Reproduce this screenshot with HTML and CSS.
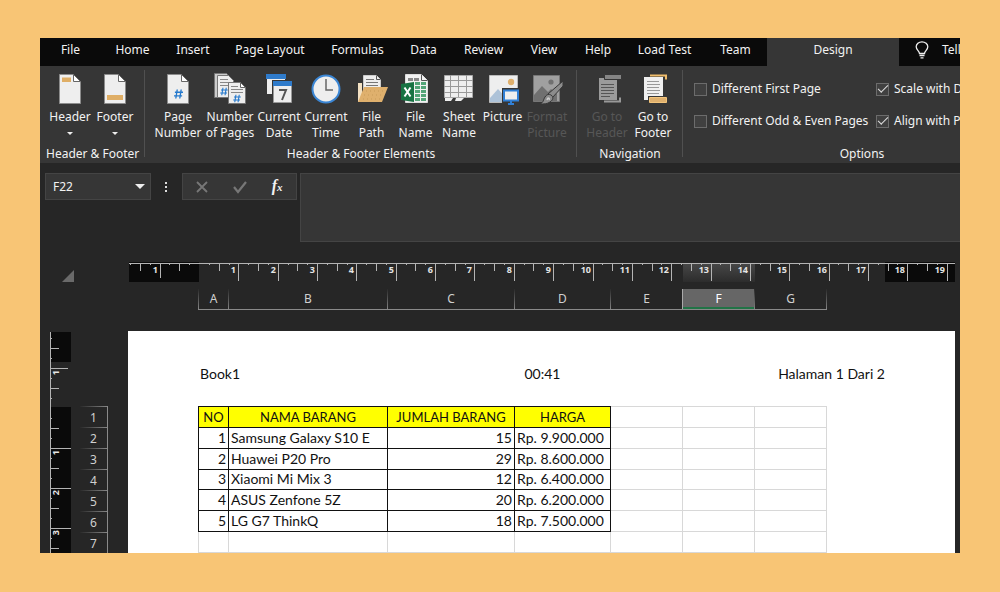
FILE: index.html
```html
<!DOCTYPE html>
<html lang="id">
<head>
    <meta charset="utf-8">
    <title>Book1 - Excel</title>
    <link rel="stylesheet" href="styles.css">
</head>
<body>
    <!-- shared icon shapes -->
    <svg class="defs" width="0" height="0">
        <symbol id="doc" viewBox="0 0 32 32">
            <path d="M5.5 1.5h14l7 7v22h-21z" fill="#eee" stroke="#8c8c8c"/>
            <path d="M19.5 1.5v7h7z" fill="#fff" stroke="#666"/>
        </symbol>
        <symbol id="hash" viewBox="0 0 10 12">
            <path d="M3.6 1L2 11M8 1L6.4 11M1 4h9M0 8h9" fill="none" stroke="#2478cc" stroke-width="1.5"/>
        </symbol>
    </svg>

    <div class="app">
        <nav class="tabs">
            <button type="button">File</button>
            <button type="button">Home</button>
            <button type="button">Insert</button>
            <button type="button">Page Layout</button>
            <button type="button">Formulas</button>
            <button type="button">Data</button>
            <button type="button">Review</button>
            <button type="button">View</button>
            <button type="button">Help</button>
            <button type="button">Load Test</button>
            <button type="button">Team</button>
            <button type="button" class="active">Design</button>
            <button type="button" class="tell-me">
                <svg width="14" height="18" viewBox="0 0 14 18" fill="none" stroke="#eee" stroke-width="1.3">
                    <path d="M4.5 12.5c0-2.5-3.3-3.5-3.3-6.7a5.8 5 0 0 1 11.6 0c0 3.2-3.3 4.2-3.3 6.7zM4.5 14.5h5M5.5 16.8h3"/>
                </svg>
                <span>Tell me</span>
            </button>
        </nav>

        <div class="ribbon">
            <section class="group group-hf">
                <div class="tools">
                    <button type="button">
                        <svg class="icon" viewBox="0 0 32 32"><use href="#doc"/><path d="M8 4.5h9V9H8z" fill="#dfae66"/></svg>
                        <span>Header</span><i class="caret"></i>
                    </button>
                    <button type="button">
                        <svg class="icon" viewBox="0 0 32 32"><use href="#doc"/><path d="M8 22h16v5H8z" fill="#dfae66"/></svg>
                        <span>Footer</span><i class="caret"></i>
                    </button>
                </div>
                <div class="group-name">Header &amp; Footer</div>
            </section>

            <section class="group group-elements">
                <div class="tools">
                    <button type="button">
                        <svg class="icon" viewBox="0 0 32 32"><use href="#doc"/><use href="#hash" x="12" y="15" width="9" height="12"/></svg>
                        <span>Page Number</span>
                    </button>
                    <button type="button">
                        <svg class="icon" viewBox="0 0 32 32">
                            <path d="M.5.5h12l3 3v21H.5z" fill="#ccc" stroke="#777"/>
                            <path d="M3.5 2.5h11l5 5v17h-16z" fill="#eee" stroke="#777"/>
                            <path d="M6 6.5h8M6 9.5h10M6 12.5h8" stroke="#888"/>
                            <use href="#hash" x="6" y="14" width="8" height="9"/>
                            <path d="M14.5 9.5h12l5 5v16h-17z" fill="#eee" stroke="#777"/>
                            <path d="M26.5 9.5v5h5z" fill="#fff" stroke="#666"/>
                            <path d="M17 13.5h7M17 16.5h12M17 19.5h12" stroke="#888"/>
                            <use href="#hash" x="19" y="21" width="8" height="9"/>
                        </svg>
                        <span>Number of Pages</span>
                    </button>
                    <button type="button">
                        <svg class="icon" viewBox="0 0 32 32">
                            <path d="M4 2h18v19H4z" fill="#eee"/>
                            <path d="M3 1h20v5H3z" fill="#2f7bcb"/>
                            <path d="M9 7h21v24H9z" fill="#363636"/>
                            <path d="M10.5 9.5h18v20h-18z" fill="#eee" stroke="#999"/>
                            <path d="M10 8h19v5H10z" fill="#2f7bcb"/>
                            <path d="M16 17h7l-4 10" fill="none" stroke="#555" stroke-width="2"/>
                        </svg>
                        <span>Current Date</span>
                    </button>
                    <button type="button">
                        <svg class="icon" viewBox="0 0 32 32">
                            <circle cx="16" cy="16" r="13.5" fill="#eee" stroke="#3b86d4" stroke-width="2"/>
                            <path d="M16 6v11h7" fill="none" stroke="#666" stroke-width="1.5"/>
                        </svg>
                        <span>Current Time</span>
                    </button>
                    <button type="button">
                        <svg class="icon" viewBox="0 0 32 32">
                            <path d="M2 10h4v19H2z" fill="#f3e1c3"/>
                            <path d="M7.5 2.5h13l4 4v12h-17z" fill="#eee" stroke="#ccc"/>
                            <path d="M20.5 2.5v4h4" fill="none" stroke="#555"/>
                            <path d="M10 6.5h8M10 9.5h12M10 12.5h12" stroke="#777"/>
                            <path d="M8 14h24l-6 15H2z" fill="#dfb06d"/>
                            <path d="M10 18h17M8 22h18M7 26h18" stroke="#c79a58" stroke-dasharray="1 3"/>
                        </svg>
                        <span>File Path</span>
                    </button>
                    <button type="button">
                        <svg class="icon" viewBox="0 0 32 32">
                            <path d="M5.5 1.5h16l6 6v22h-22z" fill="#f2f2f2" stroke="#ddd"/>
                            <path d="M21.5 1.5v6h6" fill="none" stroke="#555"/>
                            <path d="M8 5h5v3H8zM14 5h5v3h-5z" fill="#888"/>
                            <path d="M15 9h5v3h-5zM21 9h5v3h-5zM15 13h5v3h-5zM21 13h5v3h-5zM15 17h5v3h-5zM21 17h5v3h-5zM15 21h5v3h-5zM21 21h5v3h-5zM15 25h5v3h-5zM21 25h5v3h-5z" fill="#53a578"/>
                            <path d="M1 11l13-2v20L1 27z" fill="#187343"/>
                            <path d="M4.5 14.5l6 9M10.5 14.5l-6 9" stroke="#fff" stroke-width="2"/>
                        </svg>
                        <span>File Name</span>
                    </button>
                    <button type="button">
                        <svg class="icon" viewBox="0 0 32 32">
                            <path d="M1.5 2.5h28v22h-28z" fill="#eee" stroke="#aaa"/>
                            <path d="M7.5 2v22M15.5 2v22M23.5 2v22M1 7.5h29M1 13.5h29M1 19.5h29" stroke="#999"/>
                            <path d="M2 25h8l-2 3H2zM13 25h8l-3 3h-6z" fill="#eee"/>
                        </svg>
                        <span>Sheet Name</span>
                    </button>
                    <button type="button">
                        <svg class="icon" viewBox="0 0 32 32">
                            <path d="M2.5 2.5h28v27h-28z" fill="#eee" stroke="#bbb"/>
                            <path d="M3 29V25l8-9 9 10v3z" fill="#adc2d8"/>
                            <circle cx="24" cy="9" r="3.2" fill="#dfb06d"/>
                            <path d="M15 15h19v17H15z" fill="#363636"/>
                            <path d="M17 17.5h14v10H17z" fill="#eee" stroke="#3180d6" stroke-width="2"/>
                            <path d="M24 28v2.500M21 31h6" stroke="#3180d6" stroke-width="2"/>
                        </svg>
                        <span>Picture</span>
                    </button>
                    <button type="button" disabled>
                        <svg class="icon" viewBox="0 0 32 32">
                            <path d="M2.500 2.500h26v26h-26z" fill="#a0a0a0" stroke="#777"/>
                            <path d="M3 22l8-9 6 6 3-3 6 5v7H3z" fill="#707070"/>
                            <circle cx="20" cy="9" r="2.6" fill="#707070"/>
                            <path d="M32 8v5L21 25l-4-4z" fill="#8c8c8c" stroke="#363636"/>
                            <path d="M20 22c3 2 2 5-1 7s-6 2-10 2c4-2 3-4 5-7s4-3 6-2z" fill="#8c8c8c" stroke="#363636"/>
                            <path d="M16 27c1-3 3-2 2 0" fill="none" stroke="#ccc" stroke-width="1.5"/>
                        </svg>
                        <span>Format Picture</span>
                    </button>
                </div>
                <div class="group-name">Header &amp; Footer Elements</div>
            </section>

            <section class="group group-nav">
                <div class="tools">
                    <button type="button" disabled>
                        <svg class="icon" viewBox="0 0 32 32">
                            <path d="M8 5h18v22H8z" fill="#9b9b9b"/>
                            <path d="M10 11.5h13M10 14.5h13M10 17.5h13M10 20.5h13M10 23.5h9" stroke="#555"/>
                            <path d="M13.5 1.5h17v5h-17z" fill="#858585" stroke="#363636"/>
                            <path d="M13 28.5h16v-4" fill="none" stroke="#999" stroke-width="2"/>
                        </svg>
                        <span>Go to Header</span>
                    </button>
                    <button type="button">
                        <svg class="icon" viewBox="0 0 32 32">
                            <path d="M7 4h19v23H7z" fill="#f0f0f0"/>
                            <path d="M10 8.5h12M10 11.5h13M10 14.5h12M10 17.5h13M10 20.5h12" stroke="#999"/>
                            <path d="M13 2.5h16v4" fill="none" stroke="#f0bd6c" stroke-width="2"/>
                            <path d="M11 23h19v7H11z" fill="#363636"/>
                            <path d="M12.5 24.5h17v5h-17z" fill="#dfb06d" stroke="#f3c57c"/>
                        </svg>
                        <span>Go to Footer</span>
                    </button>
                </div>
                <div class="group-name">Navigation</div>
            </section>

            <section class="group group-options">
                <div class="options">
                    <label><input type="checkbox"> Different First Page</label>
                    <label><input type="checkbox" checked> Scale with Document</label>
                    <label><input type="checkbox"> Different Odd &amp; Even Pages</label>
                    <label><input type="checkbox" checked> Align with Page Margins</label>
                </div>
                <div class="group-name">Options</div>
            </section>
        </div>

        <div class="formula-bar">
            <div class="name-box">
                <input type="text" value="F22" aria-label="Name Box">
                <button type="button" aria-label="Open name list"><i class="caret"></i></button>
            </div>
            <svg class="grip" width="4" height="12" viewBox="0 0 4 12" fill="#ddd"><path d="M1 1h2v2H1zM1 5h2v2H1zM1 9h2v2H1z"/></svg>
            <div class="formula-buttons">
                <button type="button" aria-label="Cancel"><svg width="14" height="14" viewBox="0 0 14 14"><path d="M2 2l10 10M12 2L2 12" stroke="#777" stroke-width="1.8"/></svg></button>
                <button type="button" aria-label="Enter"><svg width="14" height="14" viewBox="0 0 14 14"><path d="M1 7l4 5 8-10" fill="none" stroke="#777" stroke-width="2.2"/></svg></button>
                <button type="button" class="fx" aria-label="Insert Function">f<small>x</small></button>
            </div>
            <textarea class="formula" aria-label="Formula"></textarea>
        </div>

        <div class="top-rulers">
            <svg class="corner" width="12" height="12" viewBox="0 0 12 12"><path d="M12 0v12H0z" fill="#6a6a6a"/></svg>
            <svg class="ruler-h" id="ruler-h" width="826" height="20"></svg>
        </div>
        <div class="col-heads">
            <div>A</div><div>B</div><div>C</div><div>D</div><div>E</div><div class="selected">F</div><div>G</div>
        </div>

        <div class="workspace">
            <svg class="ruler-v" id="ruler-v" width="22" height="222"></svg>
            <div class="row-heads">
                <div>1</div><div>2</div><div>3</div><div>4</div><div>5</div><div>6</div><div>7</div>
            </div>
            <main class="page">
                <header class="page-header">
                    <div>Book1</div><div>00:41</div><div>Halaman 1 Dari 2</div>
                </header>
                <table class="sheet">
                    <colgroup>
                        <col class="w-a"><col class="w-b"><col class="w-c"><col class="w-d"><col><col><col>
                    </colgroup>
                    <tr class="data"><th>NO</th><th>NAMA BARANG</th><th>JUMLAH BARANG</th><th>HARGA</th><td></td><td></td><td></td></tr>
                    <tr class="data"><td>1</td><td>Samsung Galaxy S10 E</td><td>15</td><td>Rp. 9.900.000</td><td></td><td></td><td></td></tr>
                    <tr class="data"><td>2</td><td>Huawei P20 Pro</td><td>29</td><td>Rp. 8.600.000</td><td></td><td></td><td></td></tr>
                    <tr class="data"><td>3</td><td>Xiaomi Mi Mix 3</td><td>12</td><td>Rp. 6.400.000</td><td></td><td></td><td></td></tr>
                    <tr class="data"><td>4</td><td>ASUS Zenfone 5Z</td><td>20</td><td>Rp. 6.200.000</td><td></td><td></td><td></td></tr>
                    <tr class="data"><td>5</td><td>LG G7 ThinkQ</td><td>18</td><td>Rp. 7.500.000</td><td></td><td></td><td></td></tr>
                    <tr><td></td><td></td><td></td><td></td><td></td><td></td><td></td></tr>
                </table>
            </main>
        </div>
    </div>

    <script src="rulers.js"></script>
</body>
</html>
```
FILE: styles.css
```css
* { box-sizing: border-box; }
body {
    margin: 0;
    padding: 38px 40px 39px;
    height: 100vh;
    display: flex;
    background: #f8c575;
    font: 12px/16px "Noto Sans", "Open Sans", sans-serif;
    color: #f2f2f2;
}
button, input, textarea { font: inherit; color: inherit; background: none; border: 0; padding: 0; margin: 0; }
.defs { position: absolute; }
.app { flex: 1; min-width: 0; overflow: hidden; background: #262626; }

/* tabs */
.tabs {
    display: grid;
    grid-template-columns: 61px 63px 58px 96px 79px 53px 67px 54px 54px 79px 63px 132px 100px;
    height: 28px;
    background: #0a0a0a;
}
.tabs button { padding-bottom: 4px; white-space: nowrap; }
.tabs .active { background: #363636; }
.tabs .tell-me { display: flex; align-items: center; gap: 13px; padding-left: 16px; }

/* ribbon */
.ribbon { display: flex; height: 97px; background: #363636; }
.group { flex: none; display: flex; flex-direction: column; padding: 7px 6px 1px; position: relative; }
.group::after { content: ""; position: absolute; right: 0; top: 4px; bottom: 6px; width: 1px; background: #505050; }
.group-hf { width: 105px; }
.group-elements { width: 432px; }
.group-nav { width: 106px; }
.group-options { width: 358px; }
.tools { display: grid; flex: 1; }
.group-hf .tools { grid-template-columns: 48px 42px; }
.group-elements .tools { grid-template-columns: 54px 50px 48px 46px 45px 43px 44px 43px 46px; }
.group-nav .tools { grid-template-columns: 48px 44px; }
.tools button { display: flex; flex-direction: column; align-items: center; min-width: 0; }
.tools button:disabled { color: #575757; }
.icon { width: 32px; height: 32px; margin-bottom: 4px; flex: none; overflow: visible; }
.caret { border: 3px solid transparent; border-top-color: #eee; border-bottom: 0; }
.tools .caret { margin-top: 7px; }
.group-name { text-align: center; white-space: nowrap; }

.options { flex: 1; display: grid; grid-template: 32px 32px / 182px 1fr; padding-left: 5px; }
.options label { display: flex; align-items: center; gap: 5px; white-space: nowrap; }
.options input { appearance: none; width: 13px; height: 13px; border: 1px solid #6c6c6c; background: #404040; display: grid; place-items: center; }
.options input:checked::before {
    content: "";
    width: 9px;
    height: 4px;
    border: solid #ddd;
    border-width: 0 0 1px 1px;
    transform: translateY(-2px) rotate(-45deg);
}

/* formula bar */
.formula-bar { display: flex; align-items: flex-start; height: 79px; padding: 10px 0 0 5px; }
.name-box { display: flex; align-items: center; width: 106px; height: 27px; background: #363636; border: 1px solid #444; }
.name-box input { flex: 1; min-width: 0; padding-left: 7px; }
.name-box button { display: flex; padding: 0 5px; }
.name-box .caret { border-width: 5px 5px 0; }
.grip { margin: 8px 14px 0 13px; }
.formula-buttons { display: flex; width: 115px; height: 27px; background: #363636; border: 1px solid #444; }
.formula-buttons button { flex: 1; display: flex; align-items: center; justify-content: center; }
.formula-buttons .fx { font: italic bold 16px/16px "Liberation Serif", serif; align-items: baseline; padding-top: 4px; }
.fx small { font-size: 11px; }
.formula { flex: 1; height: 69px; margin-left: 3px; background: #363636; border: 1px solid #444; border-right: 0; resize: none; }

/* rulers and headings */
.top-rulers { display: flex; align-items: flex-end; padding: 20px 5px 0 22px; }
.ruler-h { margin-left: 55px; }
.ruler-h text, .ruler-v text { font: bold 9px "Noto Sans", sans-serif; fill: #e4e4e4; text-anchor: end; }
.col-heads { display: grid; grid-template-columns: 30px 159px 127px 96px 72px 72px 73px; width: 629px; height: 21px; margin: 7px 0 0 158px; border-bottom: 1px solid #8a8a8a; }
.col-heads div {
    text-align: center;
    line-height: 20px;
    color: #d0d0d0;
    border-left: 1px solid;
    border-image: linear-gradient(#262626, #888) 1;
}
.col-heads div:last-child { border-right: 1px solid; }
.col-heads .selected { background: #666; color: #fff; border-image: none; border-left-color: #aaa; box-shadow: inset 0 -2px #217346; }

.workspace { display: flex; margin-top: 21px; padding: 0 5px 0 10px; }
.ruler-v { margin-top: 1px; flex: none; }
.row-heads { display: flex; flex-direction: column; width: 28px; height: 147px; margin: 75px 20px 0 8px; border-right: 1px solid #8a8a8a; }
.row-heads div {
    flex: 1;
    min-height: 0;
    border-top: 1px solid;
    border-image: linear-gradient(90deg, #262626, #888) 1;
    text-align: center;
    line-height: 21px;
    color: #d0d0d0;
}

/* printed page */
.page { flex: 1; min-width: 0; padding: 34px 0 0 70px; background: #fff; color: #111; font: 14px/18px Lato, sans-serif; }
.page-header { display: grid; grid-template-columns: 1fr 1fr 1fr; margin: 0 70px 23px 2px; }
.page-header div:nth-child(2) { text-align: center; }
.page-header div:nth-child(3) { text-align: right; }
.sheet { width: 629px; height: 147px; table-layout: fixed; border-collapse: collapse; }
.sheet tr { height: 20px; }
.sheet .w-a { width: 30px; }
.sheet .w-b { width: 159px; }
.sheet .w-c { width: 127px; }
.sheet .w-d { width: 96px; }
.sheet td, .sheet th { padding: 0 2px; border: 1px solid #d8d8d8; font-weight: normal; white-space: nowrap; line-height: 18px; }
.sheet th { background: #ff0; text-align: center; font-size: 13px; }
.sheet td:nth-child(1), .sheet td:nth-child(3) { text-align: right; }
/* double wins over the grey gridline where two cells share an edge */
.sheet .data th, .sheet .data td:nth-child(-n+4) { border-color: #111; border-style: double; }
```
FILE: rulers.js
```javascript
// Draws the centimetre rulers above and beside the page.
const CM = 39.35;

function rect(x, y, w, h, fill) {
    return `<rect x="${Math.round(x)}" y="${Math.round(y)}" width="${w}" height="${h}" fill="${fill}"/>`;
}

function drawTop() {
    const zero = 70;
    let out = rect(0, 0, 70, 20, '#0a0a0a') + rect(756, 0, 70, 20, '#0a0a0a');
    out += '<defs><linearGradient id="glow" x2="0" y2="1"><stop stop-color="#484848"/><stop offset="1" stop-color="#2c2c2c"/></linearGradient></defs>';
    out += rect(554, 1, 72, 19, 'url(#glow)');
    out += rect(0, 1, 826, 1, '#b4b4b4');
    for (let q = -7; q <= 76; q++) {
        const x = zero + q * CM / 4;
        if (x > 825 || q === 0) continue;
        if (q % 4 === 0) {
            out += rect(x, 2, 1, q < 0 ? 14 : 17, '#b4b4b4');
            out += `<text x="${Math.round(x) - 2}" y="11">${Math.abs(q / 4)}</text>`;
        } else {
            out += rect(x, 2, 1, q % 2 === 0 ? 7 : 1, '#b4b4b4');
        }
    }
    document.getElementById('ruler-h').innerHTML = out;
}

function drawSide() {
    const zero = 76;
    const cm = 40;
    let out = rect(0, 0, 21, 30, '#0a0a0a') + rect(0, 75, 21, 147, '#0a0a0a');
    out += rect(0, 0, 1, 222, '#b4b4b4');
    for (let q = -7; q <= 14; q++) {
        const y = zero + q * cm / 4;
        if (q === 0) continue;
        if (q % 4 === 0) {
            out += rect(1, y, q < 0 ? 17 : 20, 1, '#b4b4b4');
            out += `<text transform="translate(9 ${y + 2}) rotate(-90)">${Math.abs(q / 4)}</text>`;
        } else {
            out += rect(1, y, q % 2 === 0 ? 8 : 1, 1, '#b4b4b4');
        }
    }
    document.getElementById('ruler-v').innerHTML = out;
}

drawTop();
drawSide();
```
